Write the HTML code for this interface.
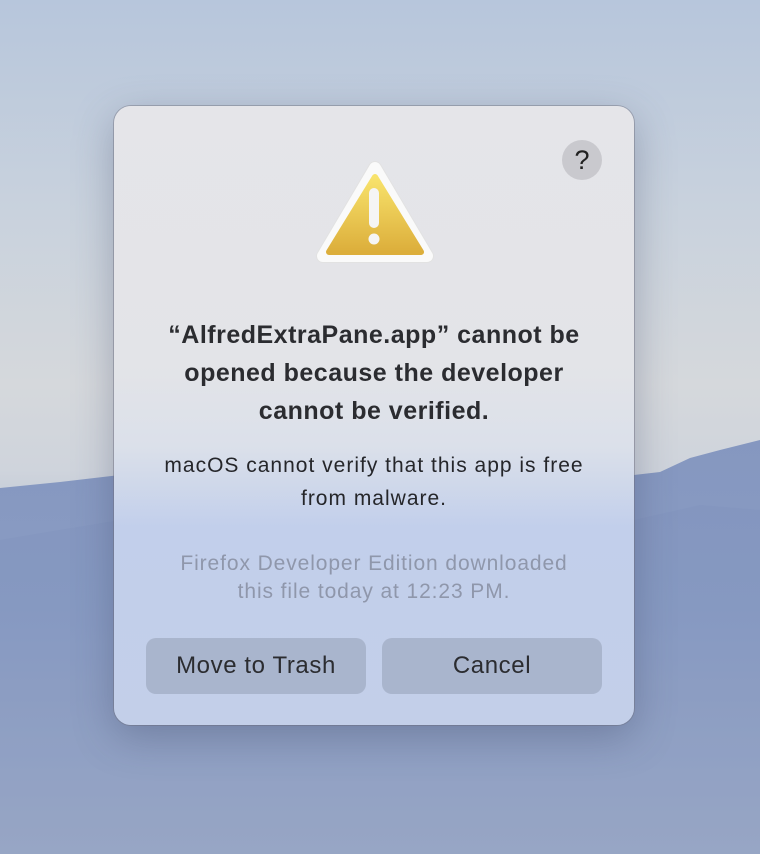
<!DOCTYPE html>
<html><head><meta charset="utf-8"><style>
html,body{margin:0;padding:0;width:760px;height:854px;overflow:hidden;font-family:"Liberation Sans",sans-serif}
.bg{position:absolute;inset:0;background:linear-gradient(180deg,#b7c6dc 0%,#c9d2dd 25%,#d5d8dc 45%,#cfd4dc 55%,#a9b5cc 70%,#a2b0cb 100%)}
.dlg{position:absolute;left:114px;top:106px;width:520px;height:619px;border-radius:17px;
background:linear-gradient(180deg,#e5e5e9 0%,#e3e4e8 42%,#dbe0ea 55%,#c2cfeb 68%,#c3cfe9 100%);
box-shadow:0 12px 40px rgba(60,70,100,.35),0 0 0 1px rgba(120,120,130,.45)}
.help{position:absolute;left:448px;top:34px;width:40px;height:40px;border-radius:50%;background:#c9c9ce;text-align:center;line-height:40px;font-size:27px;color:#222}
.t{position:absolute;left:0;width:520px;text-align:center}
h1{position:absolute;left:0;top:210px;width:520px;margin:0;text-align:center;font-size:25px;letter-spacing:0.5px;line-height:38px;font-weight:bold;color:#2b2c30}
.btn{position:absolute;top:532px;width:220px;height:56px;border-radius:10px;background:#a9b5cd;color:#2b2c30;font-size:24px;letter-spacing:0.6px;line-height:56px;text-align:center}
</style></head><body>
<div class="bg"></div>
<svg style="position:absolute;left:0;top:0" width="760" height="854">
<defs><linearGradient id="m" x1="0" y1="0" x2="0" y2="1"><stop offset="0" stop-color="#8597c0"/><stop offset=".4" stop-color="#8a9cc3"/><stop offset="1" stop-color="#a3afc9"/></linearGradient></defs>
<path d="M0 488 L60 482 L120 475 L400 470 L634 475 L660 472 L690 458 L720 450 L760 440 L760 854 L0 854Z" fill="url(#m)"/>
<path d="M0 540 L60 530 L120 520 L400 515 L634 520 L700 505 L760 510 L760 854 L0 854Z" fill="#7e93bd" opacity=".3"/>
</svg>
<div class="dlg">
<div class="help">?</div>
<svg style="position:absolute;left:199px;top:52px" width="124" height="112" viewBox="0 0 124 112">
<defs><linearGradient id="g" x1="0" y1="0" x2="0" y2="1"><stop offset="0" stop-color="#f8e36c"/><stop offset="1" stop-color="#dcae3b"/></linearGradient></defs>
<path d="M62 10 L114 98 L10 98 Z" fill="#fafafa" stroke="#e2e2e2" stroke-width="14" stroke-linejoin="round"/>
<path d="M62 10 L114 98 L10 98 Z" fill="#fafafa" stroke="#fafafa" stroke-width="12" stroke-linejoin="round"/>
<path d="M62 19 L108 94 L16 94 Z" fill="url(#g)" stroke="url(#g)" stroke-width="6" stroke-linejoin="round"/>
<rect x="56" y="30" width="10" height="40" rx="5" fill="#f5f5f5"/>
<circle cx="61" cy="81" r="5.5" fill="#f5f5f5"/>
</svg>
<h1>“AlfredExtraPane.app” cannot be<br>opened because the developer<br>cannot be verified.</h1>
<div class="t" style="top:343px;font-size:21px;letter-spacing:1px;line-height:33px;color:#25262a">macOS cannot verify that this app is free<br>from malware.</div>
<div class="t" style="top:444px;font-size:21px;letter-spacing:0.9px;line-height:28px;color:#8f97ab">Firefox Developer Edition downloaded<br>this file today at 12:23 PM.</div>
<div class="btn" style="left:32px">Move to Trash</div>
<div class="btn" style="left:268px">Cancel</div>
</div>
</body></html>
